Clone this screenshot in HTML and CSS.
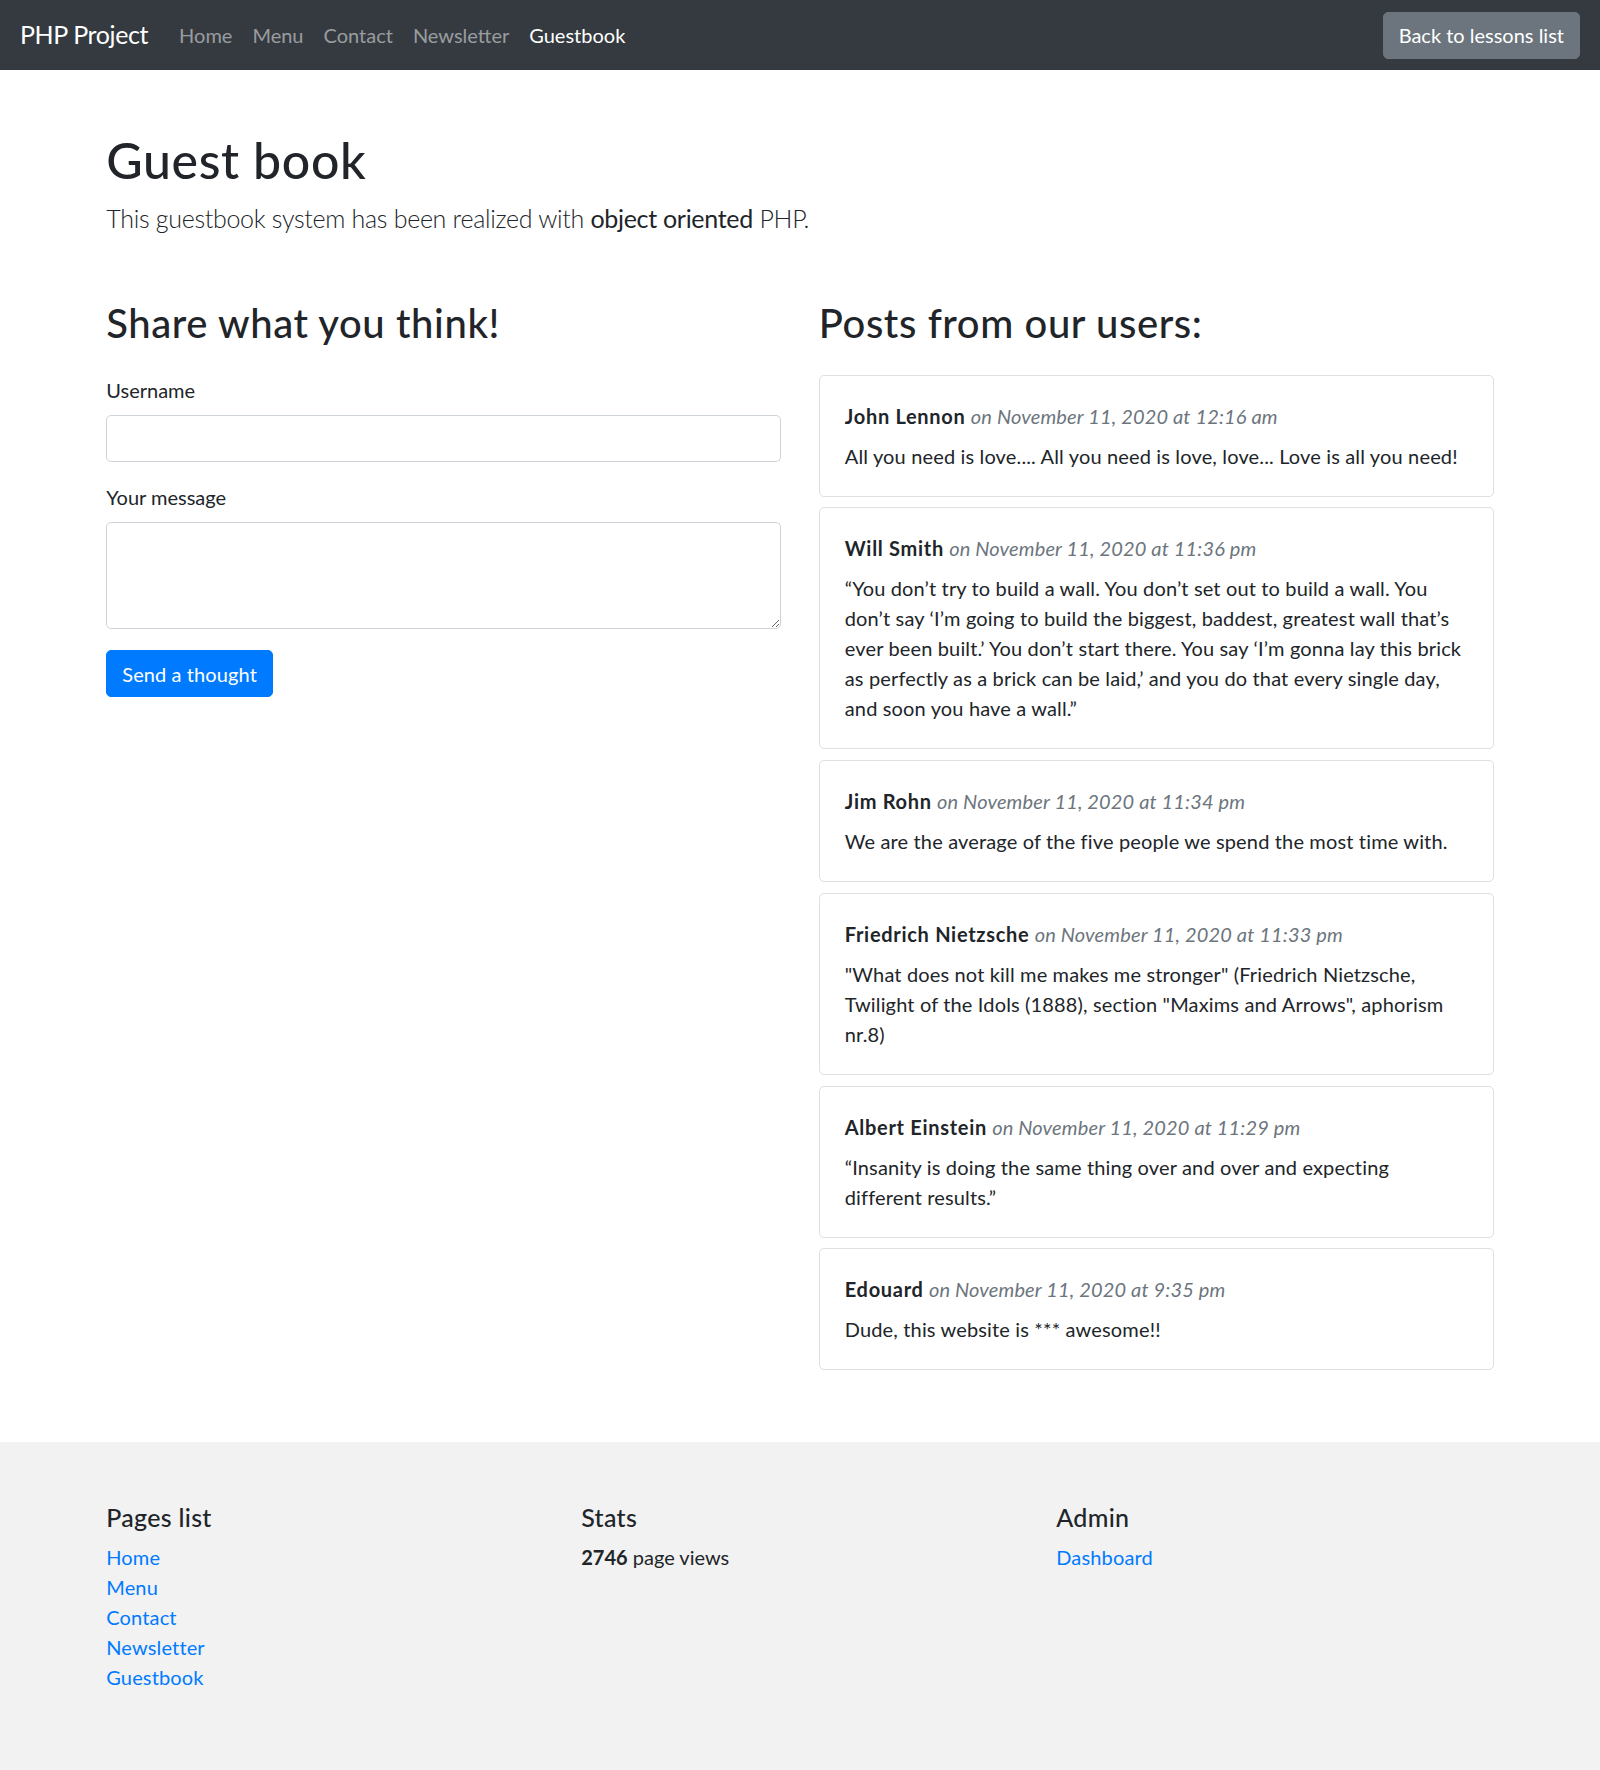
FILE: index.html
```html
<!DOCTYPE html>
<html lang="en">
<head>
<meta charset="utf-8">
<title>Guest book</title>
<link rel="stylesheet" href="styles.css">
</head>
<body>
<nav class="navbar">
  <div class="nav-left">
    <a class="brand" href="#">PHP Project</a>
    <ul class="nav">
      <li><a class="nav-link" href="#">Home</a></li>
      <li><a class="nav-link" href="#">Menu</a></li>
      <li><a class="nav-link" href="#">Contact</a></li>
      <li><a class="nav-link" href="#">Newsletter</a></li>
      <li><a class="nav-link active" href="#">Guestbook</a></li>
    </ul>
  </div>
  <a class="btn btn-secondary" href="#">Back to lessons list</a>
</nav>

<main class="container main">
  <h1 class="title">Guest book</h1>
  <p class="lead">This guestbook system has been realized with <strong>object oriented</strong> PHP.</p>

  <div class="row">
    <section class="col">
      <h2 class="section-title">Share what you think!</h2>
      <form class="form">
        <div class="form-group">
          <label class="label" for="username">Username</label>
          <input class="form-control" id="username" type="text">
        </div>
        <div class="form-group">
          <label class="label" for="message">Your message</label>
          <textarea class="form-control textarea" id="message" rows="3"></textarea>
        </div>
        <button class="btn btn-primary" type="button">Send a thought</button>
      </form>
    </section>

    <section class="col">
      <h2 class="section-title">Posts from our users:</h2>
      <div class="posts">
        <article class="card">
          <p class="post-head"><strong>John Lennon</strong> <em class="muted">on November 11, 2020 at 12:16 am</em></p>
          <p class="post-text">All you need is love.... All you need is love, love... Love is all you need!</p>
        </article>
        <article class="card">
          <p class="post-head"><strong>Will Smith</strong> <em class="muted">on November 11, 2020 at 11:36 pm</em></p>
          <p class="post-text">“You don’t try to build a wall. You don’t set out to build a wall. You don’t say ‘I’m going to build the biggest, baddest, greatest wall that’s ever been built.’ You don’t start there. You say ‘I’m gonna lay this brick as perfectly as a brick can be laid,’ and you do that every single day, and soon you have a wall.”</p>
        </article>
        <article class="card">
          <p class="post-head"><strong>Jim Rohn</strong> <em class="muted">on November 11, 2020 at 11:34 pm</em></p>
          <p class="post-text">We are the average of the five people we spend the most time with.</p>
        </article>
        <article class="card">
          <p class="post-head"><strong>Friedrich Nietzsche</strong> <em class="muted">on November 11, 2020 at 11:33 pm</em></p>
          <p class="post-text">"What does not kill me makes me stronger" (Friedrich Nietzsche, Twilight of the Idols (1888), section "Maxims and Arrows", aphorism nr.8)</p>
        </article>
        <article class="card">
          <p class="post-head"><strong>Albert Einstein</strong> <em class="muted">on November 11, 2020 at 11:29 pm</em></p>
          <p class="post-text">“Insanity is doing the same thing over and over and expecting different results.”</p>
        </article>
        <article class="card">
          <p class="post-head"><strong>Edouard</strong> <em class="muted">on November 11, 2020 at 9:35 pm</em></p>
          <p class="post-text">Dude, this website is *** awesome!!</p>
        </article>
      </div>
    </section>
  </div>
</main>

<footer class="footer">
  <div class="container footer-row">
    <div class="footer-col">
      <h5 class="footer-title">Pages list</h5>
      <ul class="footer-list">
        <li><a href="#">Home</a></li>
        <li><a href="#">Menu</a></li>
        <li><a href="#">Contact</a></li>
        <li><a href="#">Newsletter</a></li>
        <li><a href="#">Guestbook</a></li>
      </ul>
    </div>
    <div class="footer-col">
      <h5 class="footer-title">Stats</h5>
      <p class="footer-text"><strong>2746</strong> page views</p>
    </div>
    <div class="footer-col">
      <h5 class="footer-title">Admin</h5>
      <ul class="footer-list">
        <li><a href="#">Dashboard</a></li>
      </ul>
    </div>
  </div>
</footer>
</body>
</html>
```

FILE: styles.css
```css
* { box-sizing: border-box; }

html, body {
  margin: 0;
  padding: 0;
}

body {
  font-family: "Lato", "Noto Sans", sans-serif;
  font-size: 20px;
  line-height: 1.5;
  letter-spacing: 0.15px;
  color: #212529;
  background: #fff;
}

a { text-decoration: none; }

/* Navbar */
.navbar {
  height: 70px;
  background: #343a40;
  padding: 10px 20px;
  display: flex;
  align-items: center;
  justify-content: space-between;
}
.nav-left {
  display: flex;
  align-items: center;
}
.brand {
  color: #fff;
  font-size: 25px;
  line-height: 37.5px;
  letter-spacing: -0.4px;
  margin-right: 21px;
}
.nav {
  list-style: none;
  margin: 0;
  padding: 0;
  display: flex;
}
.nav-link {
  display: block;
  padding: 10px 10px;
  letter-spacing: 0;
  color: rgba(255, 255, 255, 0.5);
}
.nav-link.active { color: #fff; }

.btn {
  display: inline-block;
  font-family: inherit;
  font-size: 20px;
  line-height: 30px;
  letter-spacing: 0;
  padding: 7.5px 15px;
  border: 1px solid transparent;
  border-radius: 5px;
  color: #fff;
  cursor: pointer;
}
.btn-secondary {
  background: #6c757d;
  border-color: #6c757d;
}
.btn-primary {
  background: #007bff;
  border-color: #007bff;
  letter-spacing: 0.1px;
}

/* Layout */
.container {
  width: 1387.5px;
  margin: 0 auto;
}
.main {
  padding-top: 60px;
  padding-bottom: 72px;
}
.title {
  font-size: 50px;
  font-weight: 500;
  line-height: 60px;
  letter-spacing: 0.65px;
  margin: 0 0 10px;
}
.lead {
  font-size: 25px;
  font-weight: 300;
  line-height: 37.5px;
  letter-spacing: -0.3px;
  margin: 0 0 61px;
}
.lead strong { font-weight: 400; }

.row {
  display: grid;
  grid-template-columns: 1fr 1fr;
  column-gap: 37.5px;
  align-items: start;
}
.section-title {
  font-size: 40px;
  font-weight: 500;
  line-height: 48px;
  letter-spacing: 0.6px;
  margin: 0 0 28px;
}

/* Form */
.form-group { margin-bottom: 20px; }
.label {
  display: block;
  margin-bottom: 10px;
  letter-spacing: 0;
}
.form-control {
  display: block;
  width: 100%;
  height: 47.5px;
  padding: 7.5px 15px;
  font-family: inherit;
  font-size: 20px;
  line-height: 30px;
  color: #495057;
  background: #fff;
  border: 1px solid #ced4da;
  border-radius: 5px;
}
.textarea {
  height: 107px;
  resize: vertical;
}
.btn-primary { margin-top: 1px; }

/* Posts */
.posts {
  display: flex;
  flex-direction: column;
  gap: 10.8px;
}
.card {
  border: 1px solid rgba(0, 0, 0, 0.125);
  border-radius: 5px;
  padding: 25px;
}
.post-head { margin: 0 0 10px; }
.post-head strong {
  font-weight: 700;
  letter-spacing: 0.7px;
}
.muted { color: #6c757d; }
.post-text { margin: 0; }

/* Footer */
.footer {
  background: #f2f2f2;
  padding: 60px 0 60px;
  height: 330px;
}
.footer-row {
  display: grid;
  grid-template-columns: repeat(3, 1fr);
  column-gap: 37.5px;
}
.footer-title {
  font-size: 25px;
  font-weight: 500;
  line-height: 30px;
  letter-spacing: 0.3px;
  margin: 0 0 10px;
}
.footer-list {
  list-style: none;
  margin: 0;
  padding: 0;
}
.footer-list a { color: #007bff; }
.footer-text { margin: 0; letter-spacing: 0; }
```
